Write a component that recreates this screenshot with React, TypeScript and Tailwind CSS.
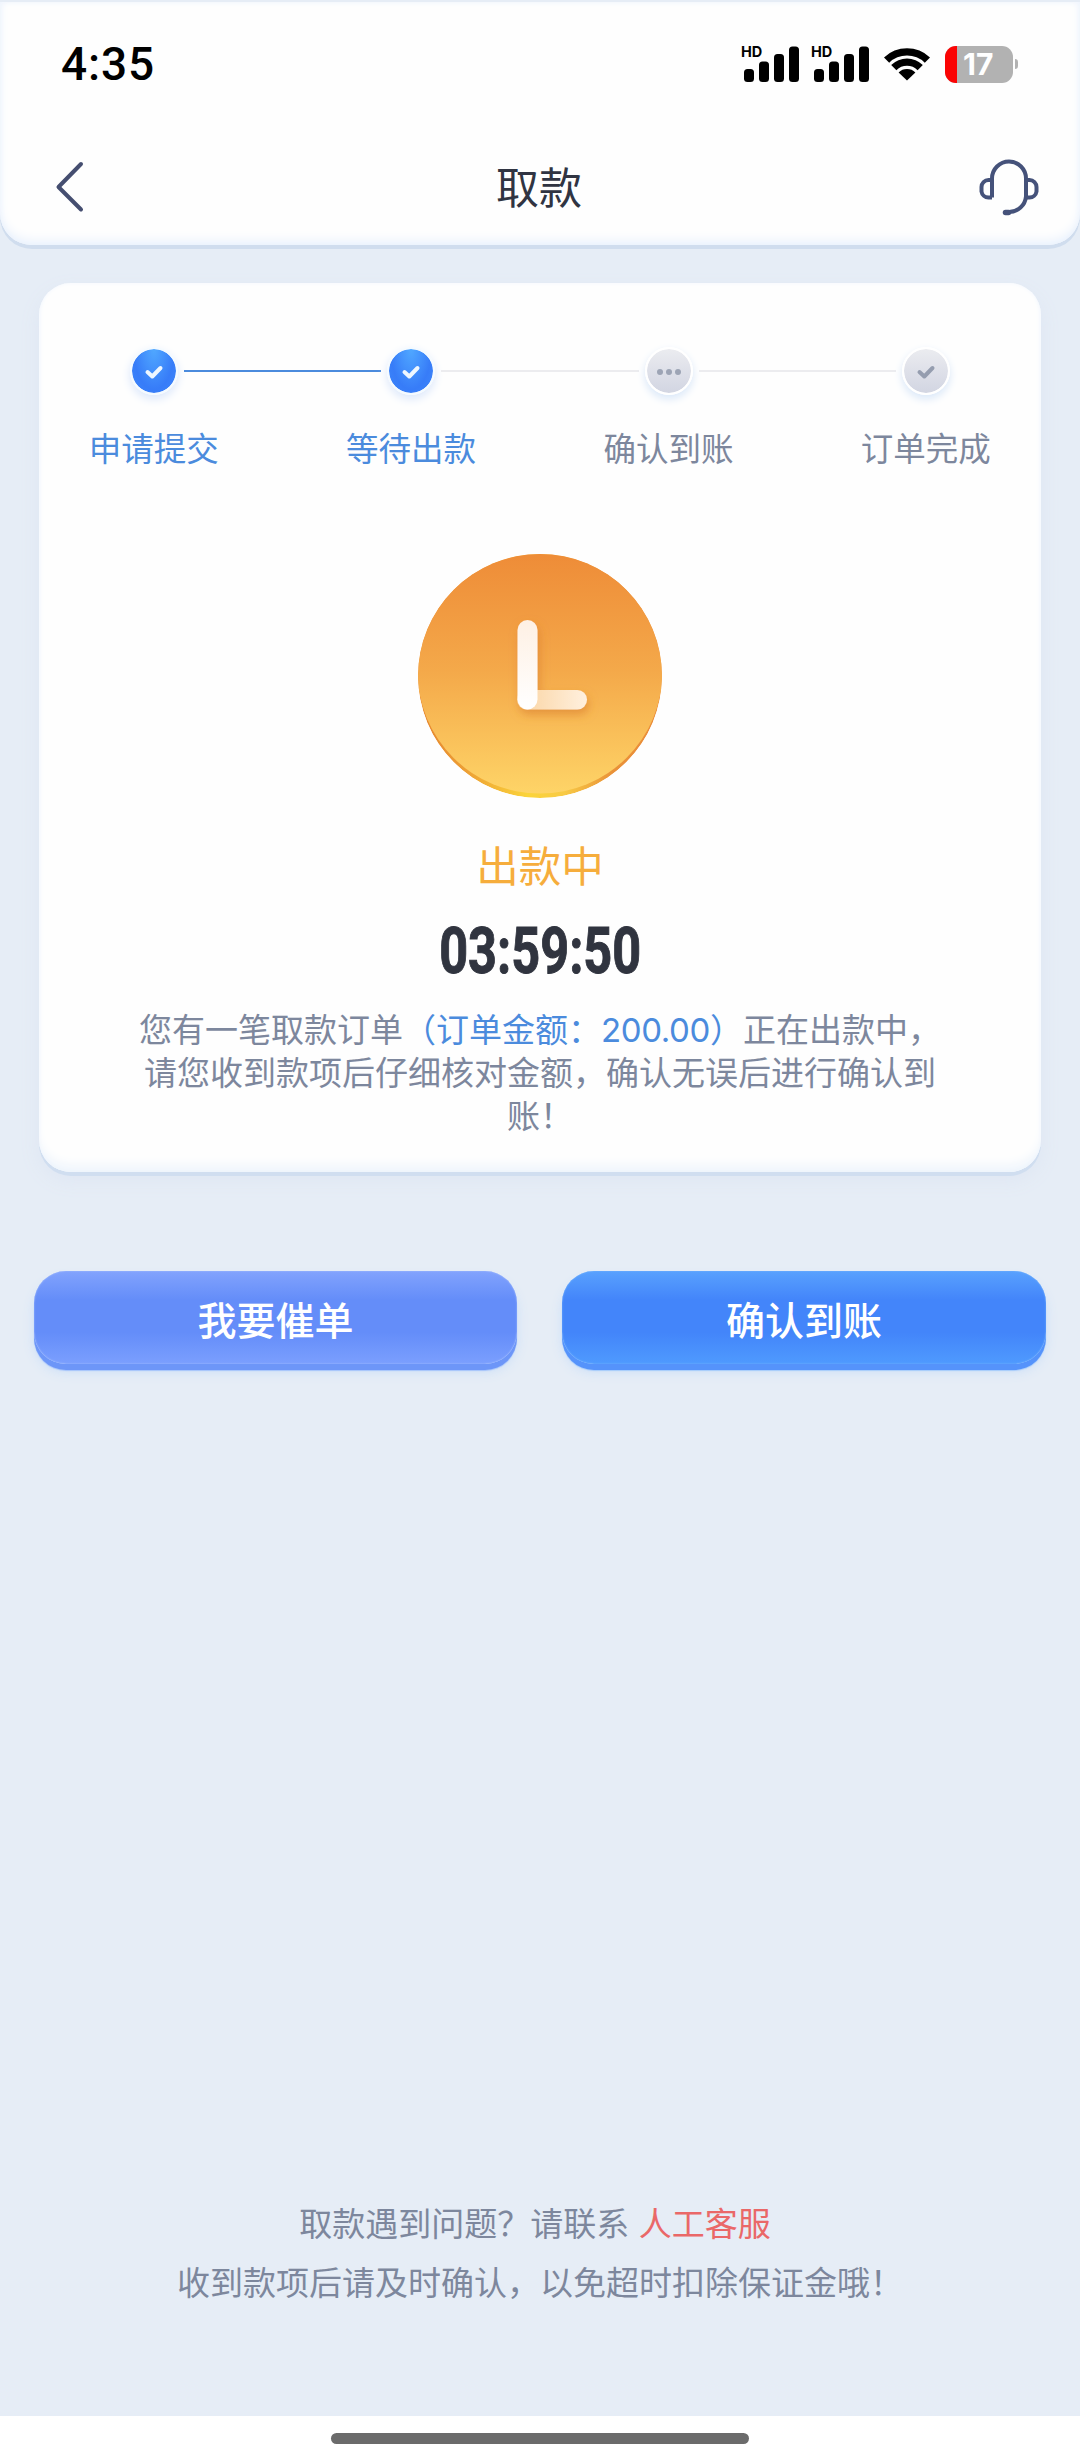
type StepState = 'done' | 'pending' | 'todo';

const steps: { label: string; state: StepState }[] = [
  { label: '申请提交', state: 'done' },
  { label: '等待出款', state: 'done' },
  { label: '确认到账', state: 'pending' },
  { label: '订单完成', state: 'todo' },
];

const Signal = () => (
  <svg width="62" height="46" viewBox="-2 -4 62 46" className="mr-[8px] overflow-visible">
    <text x="0" y="11.500" fontSize="14.500" fontWeight="700" fontFamily="Inter, sans-serif">
      HD
    </text>
    <rect x="3" y="24" width="10" height="13" rx="3.500" />
    <rect x="18" y="16.500" width="10" height="20.500" rx="3.500" />
    <rect x="33" y="9" width="10" height="28" rx="3.500" />
    <rect x="48" y="1.500" width="10" height="35.500" rx="3.500" />
  </svg>
);

const Wifi = () => (
  <svg width="48" height="38" viewBox="0 0 48 38" className="ml-[4px]">
    <path d="M1 12.500A33 33 0 0 1 47 12.500L41.800 17.700A25.500 25.500 0 0 0 6.200 17.700Z" />
    <path d="M8.200 20A22.500 22.500 0 0 1 39.800 20L34.600 25.200A15 15 0 0 0 13.400 25.200Z" />
    <path d="M15.600 27.400A12 12 0 0 1 32.400 27.400L24 35.500Z" />
  </svg>
);

const Battery = () => (
  <div className="ml-[14px] flex items-center">
    <div className="flex h-[37px] w-[68px] overflow-hidden rounded-[11px] bg-[#b2b2b2]">
      <div className="w-[12px] bg-[#fb0404]" />
      <span className="ml-[6px] font-[Inter] text-[30px] leading-[37px] font-bold text-white">17</span>
    </div>
    <div className="ml-[2px] h-[10px] w-[3px] rounded-r-full bg-[#b2b2b2]" />
  </div>
);

const StatusBar = () => (
  <div className="flex h-[123px] items-center justify-between pt-[1px] pr-[62px] pl-[61px]">
    <span className="font-[Roboto] text-[46px] leading-[50px] font-medium tracking-[0.900px] text-black">4:35</span>
    <div className="flex items-center">
      <Signal />
      <Signal />
      <Wifi />
      <Battery />
    </div>
  </div>
);

const Header = () => (
  <header className="mt-[2px] h-[243px] rounded-b-[32px] bg-[#fefefe] shadow-[inset_0_-6px_12px_-2px_#eaf2fd,inset_0_0_6px_#eef4fd,0_4px_0_#d0ddee]">
    <StatusBar />
    <div className="flex h-[120px] items-start justify-between pr-[39px] pl-[54px]">
      <svg width="62" height="60" viewBox="0 0 62 60" fill="none" className="mt-[32px]">
        <path d="M27 7L4.500 30L27 52.500" stroke="#454e70" strokeWidth="4" strokeLinecap="round" strokeLinejoin="round" />
      </svg>
      <h1 className="mt-[30px] ml-[-15px] text-[43px] leading-[60px] text-[#303442]">取款</h1>
      <svg width="64" height="60" viewBox="0 0 64 60" fill="none" stroke="#45527a" strokeWidth="4" className="mt-[32px]">
        <path d="M15 40.500V21.500a17 17 0 0 1 34 0v18a17 17 0 0 1-17 15.500h-1.500" />
        <path d="M15 23h-3.500a7 7 0 0 0-7 7v4.500a7 7 0 0 0 7 6H15" strokeLinejoin="round" />
        <path d="M49 23h3.500a7 7 0 0 1 7 7v4.500a7 7 0 0 1-7 6H49" strokeLinejoin="round" />
        <path d="M28.500 55.500h3" strokeWidth="5.500" strokeLinecap="round" />
      </svg>
    </div>
  </header>
);

const StepIcon = ({ state }: { state: StepState }) => {
  if (state === 'done') {
    return (
      <div className="flex h-[48px] w-[48px] items-center justify-center rounded-full border-2 border-[#f4faff] bg-[radial-gradient(ellipse_at_50%_0%,#50a8ff_0%,#4391fc_35%,#377cf8_65%,#3d87fa_100%)] bg-clip-padding shadow-[0_4px_10px_#dbe7fb]">
        <svg width="22" height="18" viewBox="0 0 22 18" fill="none">
          <path d="M4.500 10L9.300 14.500L17.500 6" stroke="#eef7ff" strokeWidth="4" strokeLinecap="round" strokeLinejoin="round" />
        </svg>
      </div>
    );
  }

  return (
    <div className="flex h-[48px] w-[48px] items-center justify-center rounded-full border-2 border-white bg-linear-to-b from-[#ebecf0] to-[#d2d5e2] bg-clip-padding shadow-[0_4px_9px_#d9e7f8]">
      {state === 'pending' ? (
        <svg width="26" height="8" viewBox="0 0 26 8" fill="#9da4b5">
          <circle cx="4" cy="5" r="3" />
          <circle cx="13" cy="5" r="3" />
          <circle cx="22" cy="5" r="3" />
        </svg>
      ) : (
        <svg width="22" height="18" viewBox="0 0 22 18" fill="none">
          <path d="M4.500 10L9.300 14.500L17.500 6" stroke="#959daf" strokeWidth="4" strokeLinecap="round" strokeLinejoin="round" />
        </svg>
      )}
    </div>
  );
};

const Steps = () => (
  <div>
    <div className="flex items-center pl-[91px]">
      {steps.map((step, i) => (
        <div key={step.label} className="flex items-center">
          {i > 0 && (
            <div className={i === 1 ? 'mx-[6px] h-[2px] w-[197.400px] bg-[#4b8bdd]' : 'mx-[6px] h-[2px] w-[197.400px] bg-[#ececef]'} />
          )}
          <StepIcon state={step.state} />
        </div>
      ))}
    </div>
    <div className="mt-[28px] -ml-[14px] flex">
      {steps.map((step) => (
        <span
          key={step.label}
          className={
            step.state === 'done'
              ? 'w-[257.400px] shrink-0 text-center text-[32.500px] leading-[48px] text-[#4b8bdd]'
              : 'w-[257.400px] shrink-0 text-center text-[32.500px] leading-[48px] text-[#7d879d]'
          }
        >
          {step.label}
        </span>
      ))}
    </div>
  </div>
);

const Clock = () => (
  <svg width="244" height="244" viewBox="0 0 244 244" className="mx-auto mt-[83px]">
    <defs>
      <linearGradient id="face" x1="0" y1="0" x2="0" y2="1">
        <stop offset="0" stopColor="#ee8b37" />
        <stop offset="0.500" stopColor="#f4a94a" />
        <stop offset="1" stopColor="#fed467" />
      </linearGradient>
      <linearGradient id="rim" x1="0" y1="0" x2="1" y2="0">
        <stop offset="0" stopColor="#e5842f" />
        <stop offset="0.200" stopColor="#eda035" />
        <stop offset="0.450" stopColor="#fbd43a" />
        <stop offset="0.600" stopColor="#f8ca45" />
        <stop offset="0.800" stopColor="#e99138" />
        <stop offset="1" stopColor="#ea8c3a" />
      </linearGradient>
      <linearGradient id="hand" x1="0" y1="0" x2="1" y2="0">
        <stop offset="0" stopColor="#fad3a0" />
        <stop offset="1" stopColor="#fff0de" />
      </linearGradient>
      <linearGradient id="handUp" x1="0" y1="0" x2="0" y2="1">
        <stop offset="0" stopColor="#fef0e4" />
        <stop offset="1" stopColor="#ffffff" />
      </linearGradient>
      <clipPath id="disc">
        <circle cx="122" cy="122" r="122" />
      </clipPath>
      <filter id="soft" x="-30%" y="-30%" width="160%" height="160%">
        <feDropShadow dx="2" dy="5" stdDeviation="5" floodColor="#d97d2a" floodOpacity="0.600" />
      </filter>
    </defs>
    <g clipPath="url(#disc)">
      <circle cx="122" cy="122" r="122" fill="url(#rim)" />
      <ellipse cx="122" cy="117.500" rx="122.500" ry="122" fill="url(#face)" />
    </g>
    <g filter="url(#soft)">
      <rect x="99" y="136" width="70" height="19.500" rx="9.750" fill="url(#hand)" />
      <rect x="99.500" y="66" width="20" height="89.500" rx="10" fill="url(#handUp)" />
    </g>
  </svg>
);

const OrderCard = () => (
  <section className="mx-[39px] mt-[37.500px] h-[889.500px] rounded-[32px] bg-[#fefefe] pt-[64px] shadow-[inset_0_-10px_12px_-4px_#edf4fc,inset_0_0_4px_#f4f8fe,0_4px_0_#d0def0,0_8px_20px_#dee6f3]">
    <Steps />
    <Clock />
    <div className="mt-[36px] text-center text-[42.500px] leading-[60px] text-[#f6ad3c]">出款中</div>
    <div className="mt-[27px] flex h-[60px] items-center justify-center">
      <span className="scale-x-[0.770] font-[Roboto] text-[65.500px] leading-[60px] font-bold text-[#30343f] [-webkit-text-stroke:1px_#30343f]">
        03:59:50
      </span>
    </div>
    <p className="mx-auto mt-[26px] w-[815px] text-center text-[33px] leading-[43.400px] text-[#7d879d]">
      您有一笔取款订单
      <span className="text-[#4b8bdd]">
        （订单金额：<span className="font-[Inter] leading-none tracking-[-0.400px]">200.00</span>）
      </span>
      正在出款中，
      <br />
      请您收到款项后仔细核对金额，确认无误后进行确认到
      <br />
      账！
    </p>
  </section>
);

const Actions = () => (
  <div className="mt-[99px] flex justify-between pr-[34px] pl-[34px]">
    <button className="h-[93px] w-[483px] rounded-[32px] bg-linear-[180deg,#82a3fd_0%,#648df9_31%,#648df9_66%,#7b9ffe_100%] text-[39px] leading-[60px] font-medium text-white shadow-[inset_0_0_2px_#a8c0ff,0_6px_0_#6d96f8,0_7px_1px_#a6c4fb,0_8px_12px_#cbdff8]">
      我要催单
    </button>
    <button className="h-[93px] w-[484px] rounded-[32px] bg-linear-[180deg,#59a1fe_0%,#4385fa_31%,#4385fa_66%,#4f9afe_100%] text-[39px] leading-[60px] font-medium text-white shadow-[inset_0_0_2px_#7ab8ff,0_6px_0_#5593fb,0_7px_1px_#a6cbfb,0_8px_12px_#cbdff8]">
      确认到账
    </button>
  </div>
);

const App = () => {
  return (
    <div className="flex h-[2460px] w-[1080px] flex-col overflow-hidden bg-[#e6edf6] font-['Noto_Sans_CJK_SC',sans-serif]">
      <Header />
      <OrderCard />
      <Actions />
      <footer className="mt-auto text-center text-[33px] leading-[59px] text-[#7d879d]">
        <p className="pr-[10px]">
          取款遇到问题？请联系 <span className="ml-[2px] text-[#ea6868]">人工客服</span>
        </p>
        <p>收到款项后请及时确认，以免超时扣除保证金哦！</p>
        <div className="mt-[105px] flex h-[44px] justify-center bg-white pt-[17px]">
          <div className="h-[11px] w-[418px] rounded-full bg-[#6b6b6b]" />
        </div>
      </footer>
    </div>
  );
};

export default App;
